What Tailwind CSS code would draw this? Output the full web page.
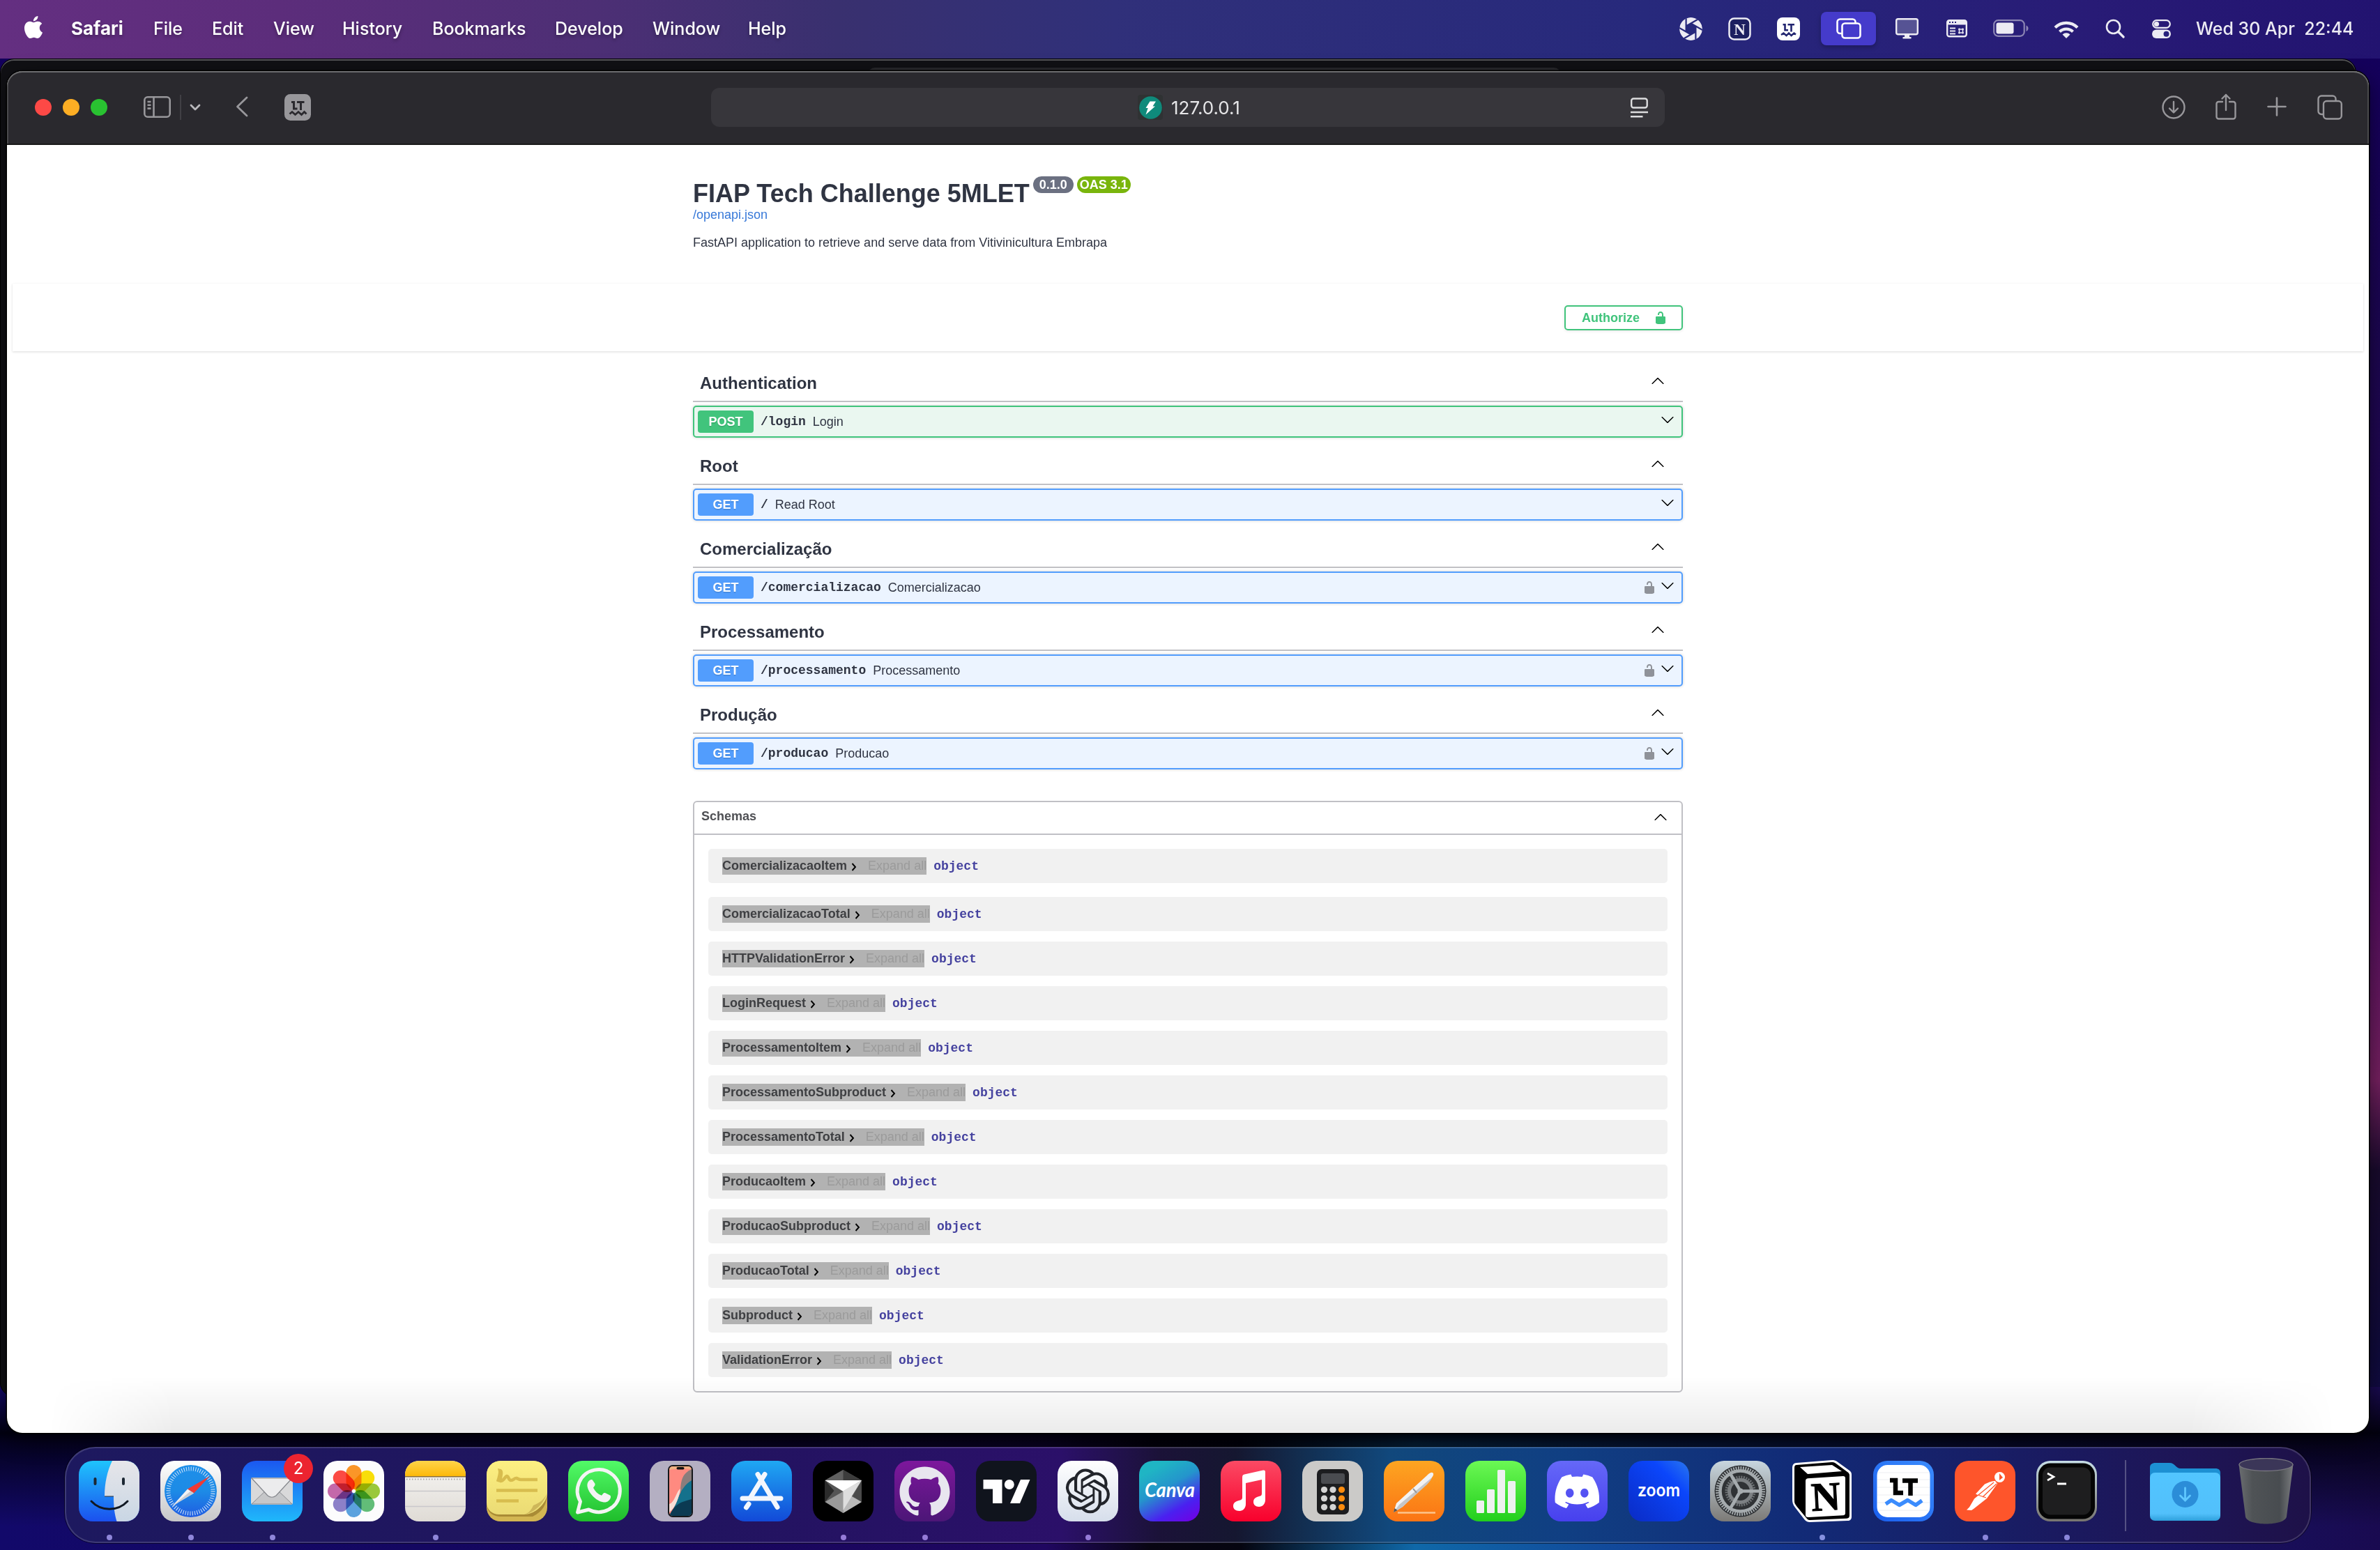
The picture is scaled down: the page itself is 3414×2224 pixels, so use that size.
<!DOCTYPE html>
<html lang="en">
<head>
<meta charset="utf-8">
<title>FIAP Tech Challenge 5MLET</title>
<script src="https://cdn.jsdelivr.net/npm/@tailwindcss/browser@4"></script>
</head>
<body class="relative h-[2224px] w-[3414px] overflow-hidden bg-[linear-gradient(to_bottom,#14005c_80px,#1c0650_500px,#260750_1000px,#4a0a5c_1250px,#74205f_1550px,#180a2c_1680px,#0f0a3c_1950px,#1a0e58_2224px)] font-['Liberation_Sans',sans-serif] text-[18px] text-[#2f3442]">

<!-- wallpaper behind the dock -->
<div class="absolute left-0 top-[1990px] h-[234px] w-full bg-[linear-gradient(to_right,#12096a_0px,#15065c_900px,#200760_1500px,#080512_1650px,#050510_1780px,#0f68a8_2030px,#123f96_2400px,#161a70_2900px,#190a50_3414px)]"></div>
<div class="absolute left-0 top-[1990px] h-[234px] w-full bg-[linear-gradient(to_bottom,#00000e00_0px,#000008e8_66px,#000008c0_80px,#00000800_200px)]"></div>

<!-- menu bar -->
<header class="relative z-0 flex h-[84px] items-start bg-[linear-gradient(to_right,#642f81_0px,#5c2d7b_400px,#4d2f75_850px,#39306f_1200px,#30307a_1600px,#27297c_2360px,#281b76_3000px,#221370_3414px)] font-[Inter,sans-serif] text-[25px] font-[450] text-white">
  <div class="flex h-[84px] shrink-0 items-start pl-[32px] pt-[23px] leading-[36px] [text-shadow:0_3px_5px_rgba(0,0,0,.3)]">
    <svg class="h-[32px] w-[32px] shrink-0" viewBox="0 0 24 24" fill="#fff"><path d="M12.152 6.896c-.948 0-2.415-1.078-3.96-1.04-2.04.027-3.91 1.183-4.961 3.014-2.117 3.675-.546 9.103 1.519 12.09 1.013 1.454 2.208 3.09 3.792 3.039 1.52-.065 2.09-.987 3.935-.987 1.831 0 2.35.987 3.96.948 1.637-.026 2.676-1.48 3.676-2.948 1.156-1.688 1.636-3.325 1.662-3.415-.039-.013-3.182-1.221-3.22-4.857-.026-3.04 2.48-4.494 2.597-4.559-1.429-2.09-3.623-2.324-4.39-2.376-2-.156-3.675 1.09-4.61 1.09zM15.53 3.83c.843-1.012 1.4-2.427 1.245-3.83-1.207.052-2.662.805-3.532 1.818-.78.896-1.454 2.338-1.273 3.714 1.338.104 2.715-.688 3.559-1.701"/></svg>
    <span class="ml-[38px] w-[118px] text-[26px] font-bold">Safari</span>
    <span class="w-[84px]">File</span>
    <span class="w-[88px]">Edit</span>
    <span class="w-[99px]">View</span>
    <span class="w-[129px]">History</span>
    <span class="w-[176px]">Bookmarks</span>
    <span class="w-[140px]">Develop</span>
    <span class="w-[137px]">Window</span>
    <span class="w-[80px]">Help</span>
  </div>
  <div class="ml-auto flex h-[84px] shrink-0 items-center pr-[32px] pb-[2px] text-[#ecebf3]">
    <svg class="h-[33px] w-[33px]" viewBox="0 0 33 33"><clipPath id="shutter"><circle cx="16.500" cy="16.500" r="16.500"/></clipPath><g clip-path="url(#shutter)"><circle cx="16.500" cy="16.500" r="16.500" fill="#ecebf3"/><path d="M16.500 24.500L23.400 20.500V12.500L16.500 8.500 9.600 12.500V20.500z" fill="#27297c"/><path d="M9.600 12.500L30.300.5M16.500 8.500L37.200 20.500M23.400 12.500V36.500M23.400 20.500L2.700 32.500M16.500 24.500L-4.200 12.500M9.600 20.500V-3.500" stroke="#27297c" stroke-width="2.200" fill="none"/></g></svg>
    <svg class="ml-[37px] h-[33px] w-[33px]" viewBox="0 0 33 33"><rect x="1.500" y="1.500" width="30" height="30" rx="7" fill="#1d2060" stroke="#ecebf3" stroke-width="2.500"/><text x="16.500" y="24.500" text-anchor="middle" font-family="Liberation Serif,serif" font-weight="700" font-size="23" fill="#ecebf3">N</text></svg>
    <svg class="ml-[37px] h-[33px] w-[33px]" viewBox="0 0 33 33"><rect width="33" height="33" rx="8" fill="#fff"/><path d="M8.500 10.200h3v8h4.500M15.500 10.200h9.500M20.500 9.500v11" stroke="#222570" stroke-width="2.600" fill="none"/><path d="M6 25l3.500-2.500 4 3.500 3.500-3.500 3.500 3.500 4-3.500 2.500 2" stroke="#222570" stroke-width="2.400" fill="none"/></svg>
    <div class="ml-[30px] flex h-[48px] w-[79px] items-center justify-center rounded-[8px] bg-[#453bcb] shadow-[0_3px_6px_rgba(0,0,0,.25)]">
      <svg class="h-[30px] w-[36px]" viewBox="0 0 36 30" fill="none" stroke="#fff" stroke-width="2.600"><path d="M8 22H5.500a4 4 0 0 1-4-4V5.500a4 4 0 0 1 4-4h18a4 4 0 0 1 4 4V7"/><rect x="8.500" y="7.500" width="26" height="21" rx="4"/></svg>
    </div>
    <svg class="ml-[28px] h-[30px] w-[33px]" viewBox="0 0 33 30"><rect x="1.200" y="1.200" width="30.600" height="22" rx="2.500" fill="#565394" stroke="#ecebf3" stroke-width="2.400"/><path d="M13 24h7v3h2.500v2.500h-12V27H13z" fill="#ecebf3"/></svg>
    <svg class="ml-[40px] h-[26px] w-[30px]" viewBox="0 0 30 26"><rect x="1.200" y="1.200" width="27.600" height="23" rx="3" fill="none" stroke="#ecebf3" stroke-width="2.400"/><rect x="1" y="1" width="28" height="6.500" rx="2" fill="#ecebf3"/><path d="M4 4h2M8 4h2M12 4h2" stroke="#27207c" stroke-width="2"/><path d="M5 12.500h8M5 16.500h8M5 20.500h8" stroke="#ecebf3" stroke-width="2"/><path d="M18.500 12.500v8M23.500 12.500v8M17 14h8M17 19h8" stroke="#ecebf3" stroke-width="1.600"/></svg>
    <svg class="ml-[37px] h-[26px] w-[52px]" viewBox="0 0 52 26"><rect x="1.200" y="1.200" width="43.500" height="22.600" rx="6" fill="none" stroke="#8c86b4" stroke-width="2.200"/><rect x="4.500" y="4.500" width="25" height="16" rx="3" fill="#ecebf3"/><path d="M47.500 8.500c4 1.500 4 7 0 8.500z" fill="#8c86b4"/></svg>
    <svg class="ml-[35px] h-[27px] w-[36px]" viewBox="0 0 36 27" fill="none" stroke="#ecebf3" stroke-width="4.200"><path d="M2 11.500a22.500 22.500 0 0 1 32 0M8.500 17.500a13.500 13.500 0 0 1 19 0"/><path d="M12.500 21.500a8 8 0 0 1 11 0L18 27z" fill="#ecebf3" stroke="none"/></svg>
    <svg class="ml-[38px] h-[28px] w-[28px]" viewBox="0 0 28 28" fill="none" stroke="#ecebf3" stroke-width="2.600"><circle cx="11.500" cy="11.500" r="9.500"/><path d="M18.500 18.500l7.500 7.500" stroke-width="3.200" stroke-linecap="round"/></svg>
    <svg class="ml-[39px] h-[27px] w-[27px]" viewBox="0 0 27 27"><rect x="1.200" y="1.200" width="24.600" height="10.600" rx="5.300" fill="none" stroke="#ecebf3" stroke-width="2.200"/><circle cx="6.500" cy="6.500" r="3.600" fill="#ecebf3"/><rect x="0" y="14.500" width="27" height="12.500" rx="6.200" fill="#ecebf3"/><circle cx="20.500" cy="20.700" r="4" fill="#27207c"/></svg>
    <span class="ml-[36px] w-[232px] whitespace-pre leading-[36px]">Wed 30 Apr  22:44</span>
  </div>
</header>

<!-- window stacked behind the browser -->
<div class="absolute left-0 top-[84px] h-[1920px] w-[3380px] rounded-[20px] border border-black bg-[#101014] shadow-[inset_0_2px_0_#555558]">
  <div class="ml-[1244px] mt-[12px] h-[20px] w-[994px] rounded-[10px] bg-[#27272b]"></div>
</div>

<!-- browser window -->
<main class="absolute left-[10px] top-[102px] flex h-[1954px] w-[3388px] flex-col overflow-hidden rounded-[22px] bg-white shadow-[0_0_0_1.5px_#000,0_10px_30px_rgba(0,0,0,.5)]">
  <div class="flex h-[106px] shrink-0 items-center rounded-t-[22px] border-b-2 border-[#1a1a1a] bg-[#2a292e] pl-[40px] shadow-[inset_0_2px_0_#6c6c6e,inset_2px_0_0_#4a4a4d,inset_-2px_0_0_#4a4a4d]">
    <div class="flex shrink-0 gap-[16px]">
      <i class="h-[24px] w-[24px] rounded-full bg-[#fd4946]"></i><i class="h-[24px] w-[24px] rounded-full bg-[#fdae24]"></i><i class="h-[24px] w-[24px] rounded-full bg-[#29c231]"></i>
    </div>
    <svg class="ml-[52px] mt-[-2px] h-[31px] w-[39px] shrink-0" viewBox="0 0 39 31" fill="none" stroke="#98979b" stroke-width="2.600"><rect x="1.300" y="1.300" width="36.400" height="28.400" rx="4.500"/><path d="M14.500 1.500v28M5.500 8h5M5.500 12.800h5M5.500 17.600h5"/></svg>
    <i class="ml-[13px] h-[36px] w-[2px] shrink-0 bg-[#414045]"></i>
    <svg class="ml-[12px] h-[10px] w-[16px] shrink-0" viewBox="0 0 16 10" fill="none" stroke="#b9b8bc" stroke-width="2.800" stroke-linecap="round" stroke-linejoin="round"><path d="M2 2l6 6 6-6"/></svg>
    <svg class="ml-[50px] mt-[-2px] h-[30px] w-[18px] shrink-0" viewBox="0 0 18 30" fill="none" stroke="#98979b" stroke-width="2.800" stroke-linecap="round" stroke-linejoin="round"><path d="M16 2L2.500 15 16 28"/></svg>
    <svg class="ml-[52px] h-[38px] w-[38px] shrink-0" viewBox="0 0 38 38"><rect width="38" height="38" rx="8.500" fill="#98979b"/><path d="M10 11.500h3.500v9.500h5M18 11.500h10.500M23.500 11v12" stroke="#2a292e" stroke-width="3" fill="none"/><path d="M7.500 28.500l3.500-3 4.500 4 4.500-4 4.500 4 4-4 3 3" stroke="#2a292e" stroke-width="2.800" fill="none"/></svg>
    <div class="ml-[574px] flex h-[56px] w-[1368px] shrink-0 items-center rounded-[12px] bg-[#37363b] font-[Inter,sans-serif] text-[26px] text-[#e6e6e8]">
      <div class="ml-[612px] flex h-[36px] w-[36px] items-center justify-center rounded-[4px] bg-[#2f3233]">
        <svg class="h-[33px] w-[33px]" viewBox="0 0 33 33"><circle cx="16.500" cy="16.500" r="16.300" fill="#0f8a7b"/><path d="M15.500 7.500h8.500l-4.500 7h3.500L9.500 26.500l3.200-9.500H9.500z" fill="#fff"/></svg>
      </div>
      <span class="ml-[12px] w-[150px] tracking-[0px]">127.0.0.1</span>
      <svg class="ml-auto mr-[24px] h-[29px] w-[25px]" viewBox="0 0 25 29" fill="none" stroke="#dddddf" stroke-width="2.400"><rect x="1.200" y="1.500" width="22.500" height="13" rx="3"/><path d="M0 21h25M0 27.300h17.500"/></svg>
    </div>
    <svg class="ml-[713px] mt-[-1px] h-[34px] w-[34px] shrink-0" viewBox="0 0 34 34" fill="none" stroke="#98979b" stroke-width="2.400" stroke-linecap="round" stroke-linejoin="round"><circle cx="17" cy="17" r="15.500"/><path d="M17 9v15M11 18.500l6 6 6-6"/></svg>
    <svg class="ml-[43px] mt-[-2px] h-[38px] w-[30px] shrink-0" viewBox="0 0 30 38" fill="none" stroke="#98979b" stroke-width="2.400" stroke-linecap="round" stroke-linejoin="round"><path d="M10 12H4.500a3 3 0 0 0-3 3v18.500a3 3 0 0 0 3 3h21a3 3 0 0 0 3-3V15a3 3 0 0 0-3-3H20M15 24V2M9.500 7.500L15 2l5.500 5.500"/></svg>
    <svg class="ml-[44px] mt-[-3px] h-[28px] w-[28px] shrink-0" viewBox="0 0 28 28" fill="none" stroke="#98979b" stroke-width="2.600" stroke-linecap="round"><path d="M14 1.500v25M1.500 14h25"/></svg>
    <svg class="ml-[44px] h-[36px] w-[36px] shrink-0" viewBox="0 0 36 36" fill="none" stroke="#98979b" stroke-width="2.400"><path d="M9 28H6a4.500 4.500 0 0 1-4.500-4.500V6A4.500 4.500 0 0 1 6 1.500h16A4.500 4.500 0 0 1 26.500 6v2.500"/><rect x="9" y="9" width="25.800" height="25.500" rx="4.500"/></svg>
  </div>

  <section class="mx-auto flex w-[1420px] shrink-0 flex-col items-start pt-[50px]">
    <div class="flex h-[40px] items-start">
      <h1 class="whitespace-nowrap text-[36px] font-bold leading-[40px]">FIAP Tech Challenge 5MLET</h1>
      <span class="ml-[5px] mt-[-5px] flex h-[24px] w-[58px] shrink-0 items-center justify-center rounded-full bg-[#6b7081] text-[18px] font-bold leading-[20px] text-white">0.1.0</span>
      <span class="ml-[5px] mt-[-5px] flex h-[24px] w-[77px] shrink-0 items-center justify-center whitespace-nowrap rounded-full bg-[#79b50c] text-[18px] font-bold leading-[20px] text-white">OAS 3.1</span>
    </div>
    <a class="leading-[20px] text-[#3778d8]">/openapi.json</a>
    <p class="mt-[20px] leading-[20px]">FastAPI application to retrieve and serve data from Vitivinicultura Embrapa</p>
  </section>

  <section class="mx-[8px] mt-[49px] h-[97px] shrink-0 bg-white pt-[31px] shadow-[0_1px_3px_rgba(0,0,0,.15)]">
    <div class="mx-auto flex w-[1420px] justify-end">
      <button class="flex h-[36px] w-[170px] items-center rounded-[5px] border-2 border-[#41c47c] pl-[23px] font-bold leading-[20px] text-[#41c47c] shadow-[0_1px_4px_rgba(0,0,0,.1)]">Authorize
        <svg class="ml-[20px] h-[20px] w-[20px]" viewBox="0 0 20 20" fill="#41c47c"><path d="M15.800 8H14V5.600C14 2.703 12.665 1 10 1 7.334 1 6 2.703 6 5.600V6h2v-.801C8 3.754 8.797 3 10 3c1.203 0 2 .754 2 2.199V8H4c-.553 0-1 .646-1 1.199V17c0 .549.428 1.139.951 1.307l1.197.387C5.672 18.861 6.550 19 7.100 19h5.800c.549 0 1.428-.139 1.951-.307l1.196-.387c.524-.167.953-.757.953-1.306V9.199C17 8.646 16.352 8 15.800 8z"/></svg>
      </button>
    </div>
  </section>

  <div id="tags" class="mx-auto mt-[18px] w-[1420px] shrink-0"></div>

  <section class="mx-auto mt-[32px] w-[1420px] shrink-0 rounded-[6px] border-2 border-[#c0c0c5]">
    <div class="flex h-[47px] items-center justify-between border-b-2 border-[#c0c0c5] pl-[10px] pr-[20px] font-bold text-[#4f5054]">
      <span class="mt-[-5px] leading-[20px]">Schemas</span>
      <svg class="mt-[-1px] h-[20px] w-[20px] rotate-180" viewBox="0 0 20 20" fill="#000"><path d="M17.418 6.109c.272-.268.709-.268.979 0s.271.701 0 .969l-7.908 7.830c-.27.268-.707.268-.979 0l-7.908-7.830c-.27-.268-.27-.701 0-.969.271-.268.709-.268.979 0L10 13.250l7.418-7.141z"/></svg>
    </div>
    <div id="schemas" class="flex flex-col gap-[15px] px-[20px] py-[20px]"></div>
  </section>
</main>
<div class="pointer-events-none absolute left-[10px] top-[1975px] h-[81px] w-[3388px] rounded-b-[22px] bg-[linear-gradient(to_bottom,#0000_0px,#00000014_81px)] [mask-image:linear-gradient(to_right,transparent_60px,#000_240px,#000_3130px,transparent_3340px)]"></div>

<!-- dock -->
<nav class="absolute left-[93px] top-[2076px] flex h-[138px] w-[3222px] items-start gap-[30px] rounded-[44px] border-2 border-white/15 bg-[linear-gradient(to_right,#1d195f_0px,#21145f_900px,#2b1069_1430px,#1b1238_1570px,#151730_1680px,#122f52_1780px,#11487c_1900px,#103f83_2150px,#122a76_2500px,#1a1a60_2850px,#1e1556_3050px,#1e1148_3222px)] bg-origin-border pl-[18px] pt-[18px] shadow-[0_0_0_1px_rgba(0,0,0,.5)]">
  <!-- Finder -->
  <div class="relative flex w-[87px] shrink-0 flex-col items-center gap-[19px]">
    <svg class="h-[87px] w-[87px] rounded-[20px]" viewBox="0 0 87 87"><defs><linearGradient id="fa" x1="0" y1="0" x2="0" y2="1"><stop offset="0" stop-color="#1fc4fd"/><stop offset="1" stop-color="#1b50ee"/></linearGradient><linearGradient id="fb" x1="0" y1="0" x2="0" y2="1"><stop offset="0" stop-color="#e6e6ea"/><stop offset="1" stop-color="#c9d6e4"/></linearGradient></defs><rect width="87" height="87" fill="url(#fa)"/><path d="M48 0C41 14 37 32 37 51H50C50 64 51 76 54.500 87H87V0z" fill="url(#fb)"/><path d="M37 51h13" stroke="#333" stroke-width="1"/><path d="M23.500 26v7M64 26v7" stroke="#1b2733" stroke-width="4" stroke-linecap="round"/><path d="M18 58c14 15 38 15 52 0" stroke="#111822" stroke-width="3" fill="none" stroke-linecap="round"/></svg>
    <i class="h-[8px] w-[8px] rounded-full bg-[#8f86da]"></i>
  </div>
  <!-- Safari -->
  <div class="relative flex w-[87px] shrink-0 flex-col items-center gap-[19px]">
    <svg class="h-[87px] w-[87px] rounded-[20px]" viewBox="0 0 87 87"><defs><linearGradient id="sa" x1="0" y1="0" x2="0" y2="1"><stop offset="0" stop-color="#fff"/><stop offset="1" stop-color="#c6c6c8"/></linearGradient><linearGradient id="sb" x1="0" y1="0" x2="0" y2="1"><stop offset="0" stop-color="#1e8fe9"/><stop offset=".5" stop-color="#1d8be6"/><stop offset="1" stop-color="#1f5ce2"/></linearGradient></defs><rect width="87" height="87" fill="url(#sa)"/><circle cx="43.500" cy="43.500" r="37.500" fill="url(#sb)"/><circle cx="43.500" cy="43.500" r="32" fill="none" stroke="#d5e6fa" stroke-width="6" stroke-dasharray="1 2.350"/><path d="M71 22L39 40.500l9 6z" fill="#f03a34"/><path d="M17 65L39 40.500l9 6z" fill="#f2f2f4"/><path d="M17 65l26.500-21.500 4.500 3z" fill="#c9ccd2"/></svg>
    <i class="h-[8px] w-[8px] rounded-full bg-[#8f86da]"></i>
  </div>
  <!-- Mail -->
  <div class="relative flex w-[87px] shrink-0 flex-col items-center gap-[19px]">
    <svg class="h-[87px] w-[87px] rounded-[20px]" viewBox="0 0 87 87"><defs><linearGradient id="ma" x1="0" y1="0" x2="0" y2="1"><stop offset="0" stop-color="#1b58f0"/><stop offset="1" stop-color="#1fb8fb"/></linearGradient></defs><rect width="87" height="87" fill="url(#ma)"/><rect x="13" y="24" width="60" height="39" rx="3" fill="#d9d9da"/><path d="M14 62l22-21h14l22 21z" fill="#c6c7c9" stroke="#8b8d92" stroke-width="1"/><path d="M14 25l23 25c3.500 3 8.500 3 12 0l23-25z" fill="#ececed" stroke="#85878c" stroke-width="1.200"/></svg>
    <i class="h-[8px] w-[8px] rounded-full bg-[#8f86da]"></i>
    <span class="absolute left-[60px] top-[-10px] flex h-[42px] w-[42px] items-center justify-center rounded-full bg-[#ec2430] font-[Inter,sans-serif] text-[24px] text-white">2</span>
  </div>
  <!-- Photos -->
  <svg class="h-[87px] w-[87px] shrink-0 rounded-[20px]" viewBox="0 0 87 87"><rect width="87" height="87" fill="#fcfcfd"/><g transform="translate(43.500 43.500)" class="isolate"><rect x="-11" y="-37.500" width="22" height="35" rx="11" fill="#fb9628" class="mix-blend-multiply"/><rect x="-11" y="-37.500" width="22" height="35" rx="11" fill="#f8de0a" class="mix-blend-multiply" transform="rotate(45)"/><rect x="-11" y="-37.500" width="22" height="35" rx="11" fill="#9ac83c" class="mix-blend-multiply" transform="rotate(90)"/><rect x="-11" y="-37.500" width="22" height="35" rx="11" fill="#62bd78" class="mix-blend-multiply" transform="rotate(135)"/><rect x="-11" y="-37.500" width="22" height="35" rx="11" fill="#5ba2de" class="mix-blend-multiply" transform="rotate(180)"/><rect x="-11" y="-37.500" width="22" height="35" rx="11" fill="#8c80c8" class="mix-blend-multiply" transform="rotate(225)"/><rect x="-11" y="-37.500" width="22" height="35" rx="11" fill="#c468aa" class="mix-blend-multiply" transform="rotate(270)"/><rect x="-11" y="-37.500" width="22" height="35" rx="11" fill="#fb4a44" class="mix-blend-multiply" transform="rotate(315)"/></g></svg>
  <!-- Notes -->
  <div class="relative flex w-[87px] shrink-0 flex-col items-center gap-[19px]">
    <svg class="h-[87px] w-[87px] rounded-[20px]" viewBox="0 0 87 87"><defs><linearGradient id="na" x1="0" y1="0" x2="0" y2="1"><stop offset="0" stop-color="#fed44a"/><stop offset="1" stop-color="#fdb90a"/></linearGradient><linearGradient id="nb" x1="0" y1="0" x2="0" y2="1"><stop offset="0" stop-color="#f7f6f4"/><stop offset="1" stop-color="#dfdbd5"/></linearGradient></defs><rect width="87" height="87" fill="url(#nb)"/><rect width="87" height="22" fill="url(#na)"/><path d="M0 22.800h87" stroke="#8a6f3c" stroke-width="1.600"/><path d="M2 26.500h84" stroke="#a9a7a4" stroke-width="2" stroke-dasharray="1.500 2.500"/><path d="M0 43.500h87M0 65.500h87" stroke="#c9c8cb" stroke-width="1.600"/></svg>
    <i class="h-[8px] w-[8px] rounded-full bg-[#8f86da]"></i>
  </div>
  <!-- Stickies -->
  <svg class="h-[87px] w-[87px] shrink-0 rounded-[20px]" viewBox="0 0 87 87"><defs><linearGradient id="st" x1="0" y1="0" x2="0" y2="1"><stop offset="0" stop-color="#fdf082"/><stop offset="1" stop-color="#ebdb74"/></linearGradient></defs><rect width="87" height="87" fill="#d3b652"/><path d="M0 60Q0 78 18 80H66Q87 70 87 46V40L60 70z" fill="#a98b35"/><path d="M0 0H87V46C87 60 70 77 54 77H18C8 77 0 70 0 60z" fill="url(#st)"/><path d="M54 77c10-1 27-12 33-31-4 9-10 14-20 18-3 7-7 11-13 13z" fill="#b99d46" opacity=".6"/><g stroke="#d8bd4e" fill="none" stroke-width="4.500"><path d="M16 30c2-6 4-12 3-16 5 1-1 13 1 15 5 0 6-6 9-7 3 0 2 6 6 6s5-4 8-3 3 2 6 2h24"/><path d="M14 42.500h59M14 57.500h32"/></g></svg>
  <!-- WhatsApp -->
  <svg class="h-[87px] w-[87px] shrink-0 rounded-[20px]" viewBox="0 0 87 87"><defs><linearGradient id="wa" x1="0" y1="0" x2="0" y2="1"><stop offset="0" stop-color="#52fb68"/><stop offset="1" stop-color="#1fbd2b"/></linearGradient></defs><rect width="87" height="87" fill="url(#wa)"/><path d="M13.500 74l4-15.500A30.500 30.500 0 1 1 29.500 70z" fill="none" stroke="#f4f4f4" stroke-width="5" stroke-linejoin="round"/><path d="M33 27c-4 1-6 5-5.500 9.500C29 46 40 58 51 59.500c5 .5 9-2.500 10-7 .3-1.500-.2-2.500-1.500-3.200l-6-3c-1.500-.7-2.500-.3-3.300.7l-2.200 2.700c-5.500-2-9.500-6-12-11l2-3c.7-1 .8-2 .3-3.200L35.500 28.500c-.5-1.200-1.300-1.700-2.500-1.500z" fill="#f4f4f4"/></svg>
  <!-- iPhone Mirroring -->
  <svg class="h-[87px] w-[87px] shrink-0 rounded-[20px]" viewBox="0 0 87 87"><rect width="87" height="87" fill="#b4afc2"/><clipPath id="ph"><rect x="28" y="8" width="32" height="71" rx="5"/></clipPath><rect x="26" y="6" width="36" height="75" rx="7" fill="#15171a"/><g clip-path="url(#ph)"><rect x="28" y="8" width="32" height="71" fill="#ff8a80"/><path d="M60 12C48 18 44 26 44 46L60 28z" fill="#8b7d7c"/><path d="M28 8h32v4c-12-1-20-1-32 1z" fill="#efb183"/><path d="M28 79c14-20 12-38 32-51v51z" fill="#14718c"/><path d="M28 79c8-18 18-20 32-24v24z" fill="#0b3a52"/><path d="M28 62c8-2 10-18 16-22-2 12-6 26-16 34z" fill="#f7ded6"/></g><rect x="38.500" y="9" width="11" height="3.500" rx="1.700" fill="#111"/></svg>
  <!-- App Store -->
  <svg class="h-[87px] w-[87px] shrink-0 rounded-[20px]" viewBox="0 0 87 87"><defs><linearGradient id="as" x1="0" y1="0" x2="0" y2="1"><stop offset="0" stop-color="#1fa8f3"/><stop offset="1" stop-color="#1249d8"/></linearGradient></defs><rect width="87" height="87" fill="url(#as)"/><g stroke="#f3f7fd" stroke-width="7" stroke-linecap="round"><path d="M16 54h55"/><path d="M38 19.500L66 66.500"/><path d="M48 19.500L28 52M25 62l-3.500 5"/></g></svg>
  <!-- Cursor -->
  <div class="relative flex w-[87px] shrink-0 flex-col items-center gap-[19px]">
    <svg class="h-[87px] w-[87px] rounded-[20px]" viewBox="0 0 87 87"><rect width="87" height="87" fill="#000"/><path d="M43.500 13L70 28v31L43.500 75 17.500 59V28z" fill="#555"/><path d="M43.500 13L70 28H17.500z" fill="#3c3c3c"/><path d="M43.500 13v15h-26z" fill="#606060"/><path d="M17.500 28v31l13-16z" fill="#2b2b2b"/><path d="M17.500 59l26-15v31z" fill="#9a9a9a"/><path d="M43.500 44V75L70 59z" fill="#b9b9b9"/><path d="M70 28v31L58 51z" fill="#4a4a4a"/><path d="M17.500 28H70L43.500 44z" fill="#fff"/><path d="M70 28L43.500 43v28z" fill="#dedede"/></svg>
    <i class="h-[8px] w-[8px] rounded-full bg-[#957bd8]"></i>
  </div>
  <!-- GitHub -->
  <div class="relative flex w-[87px] shrink-0 flex-col items-center gap-[19px]">
    <svg class="h-[87px] w-[87px] rounded-[20px]" viewBox="0 0 87 87"><defs><linearGradient id="gh" x1="0" y1="0" x2="0" y2="1"><stop offset="0" stop-color="#7d179c"/><stop offset="1" stop-color="#4c1677"/></linearGradient></defs><rect width="87" height="87" fill="url(#gh)"/><path transform="translate(7.500 7.500) scale(3)" fill="#e8e6ef" d="M12 .297c-6.630 0-12 5.373-12 12 0 5.303 3.438 9.800 8.205 11.385.6.113.82-.258.82-.577 0-.285-.01-1.040-.015-2.040-3.338.724-4.042-1.610-4.042-1.610C4.422 18.070 3.633 17.700 3.633 17.700c-1.087-.744.084-.729.084-.729 1.205.084 1.838 1.236 1.838 1.236 1.070 1.835 2.809 1.305 3.495.998.108-.776.417-1.305.76-1.605-2.665-.3-5.466-1.332-5.466-5.930 0-1.310.465-2.380 1.235-3.220-.135-.303-.54-1.523.105-3.176 0 0 1.005-.322 3.300 1.230.96-.267 1.980-.399 3-.405 1.020.006 2.040.138 3 .405 2.280-1.552 3.285-1.230 3.285-1.230.645 1.653.24 2.873.12 3.176.765.840 1.230 1.910 1.230 3.220 0 4.610-2.805 5.625-5.475 5.920.42.360.81 1.096.81 2.220 0 1.606-.015 2.896-.015 3.286 0 .315.210.690.825.570C20.565 22.092 24 17.592 24 12.297c0-6.627-5.373-12-12-12"/></svg>
    <i class="h-[8px] w-[8px] rounded-full bg-[#957bd8]"></i>
  </div>
  <!-- TradingView -->
  <svg class="h-[87px] w-[87px] shrink-0 rounded-[20px]" viewBox="0 0 87 87"><rect width="87" height="87" fill="#10141d"/><path d="M10.500 27h27v34H24V40.500H10.500zM64 27h13.500L63 61H49z" fill="#fff"/><circle cx="47.800" cy="34" r="7" fill="#fff"/></svg>
  <!-- ChatGPT -->
  <div class="relative flex w-[87px] shrink-0 flex-col items-center gap-[19px]">
    <svg class="h-[87px] w-[87px] rounded-[20px]" viewBox="0 0 87 87"><defs><linearGradient id="cg" x1="0" y1="0" x2="0" y2="1"><stop offset="0" stop-color="#fff"/><stop offset="1" stop-color="#d6deeb"/></linearGradient></defs><rect width="87" height="87" fill="url(#cg)"/><path transform="translate(11.500 11.500) scale(2.660)" fill="#22252b" d="M22.282 9.821a5.985 5.985 0 0 0-.516-4.911 6.046 6.046 0 0 0-6.510-2.900A6.065 6.065 0 0 0 4.981 4.182a5.985 5.985 0 0 0-3.998 2.900 6.046 6.046 0 0 0 .743 7.097 5.980 5.980 0 0 0 .511 4.911 6.051 6.051 0 0 0 6.515 2.900A5.985 5.985 0 0 0 13.260 24a6.056 6.056 0 0 0 5.772-4.206 5.989 5.989 0 0 0 3.998-2.900 6.056 6.056 0 0 0-.748-7.073zM13.260 22.430a4.476 4.476 0 0 1-2.876-1.041l.142-.080 4.778-2.758a.795.795 0 0 0 .393-.681v-6.737l2.020 1.169a.071.071 0 0 1 .038.052v5.583a4.504 4.504 0 0 1-4.495 4.494zM3.599 18.304a4.471 4.471 0 0 1-.535-3.014l.142.085 4.783 2.758a.771.771 0 0 0 .781 0l5.843-3.368v2.332a.080.080 0 0 1-.033.062L9.740 19.950a4.499 4.499 0 0 1-6.141-1.646zM2.341 7.896a4.485 4.485 0 0 1 2.366-1.973V11.600a.766.766 0 0 0 .388.677l5.814 3.354-2.020 1.168a.076.076 0 0 1-.071 0l-4.830-2.786A4.504 4.504 0 0 1 2.341 7.872zM18.937 11.751L13.104 8.364 15.119 7.200a.076.076 0 0 1 .071 0l4.830 2.791a4.494 4.494 0 0 1-.677 8.104v-5.677a.790.790 0 0 0-.406-.667zM20.948 8.728l-.142-.085-4.774-2.782a.776.776 0 0 0-.785 0L9.409 9.230V6.897a.066.066 0 0 1 .028-.062l4.830-2.786a4.499 4.499 0 0 1 6.681 4.679zM8.307 12.863l-2.020-1.164a.080.080 0 0 1-.038-.057V6.074a4.499 4.499 0 0 1 7.376-3.454l-.142.081L8.704 5.459a.795.795 0 0 0-.393.681zM9.404 10.498l2.602-1.500 2.607 1.500v2.999l-2.597 1.500-2.607-1.500Z"/></svg>
    <i class="h-[8px] w-[8px] rounded-full bg-[#957bd8]"></i>
  </div>
  <!-- Canva -->
  <svg class="h-[87px] w-[87px] shrink-0 rounded-[20px]" viewBox="0 0 87 87"><defs><linearGradient id="ca" x1=".3" y1=".1" x2=".8" y2="1"><stop offset="0" stop-color="#1fb5c4"/><stop offset=".35" stop-color="#2495cc"/><stop offset=".75" stop-color="#4a20f0"/><stop offset="1" stop-color="#6a06e6"/></linearGradient></defs><rect width="87" height="87" fill="url(#ca)"/><text x="44" y="52" text-anchor="middle" textLength="72" lengthAdjust="spacingAndGlyphs" font-family="Lato,sans-serif" font-style="italic" font-weight="700" font-size="28" fill="#fff">Canva</text></svg>
  <!-- Music -->
  <svg class="h-[87px] w-[87px] shrink-0 rounded-[20px]" viewBox="0 0 87 87"><defs><linearGradient id="mu" x1="0" y1="0" x2="0" y2="1"><stop offset="0" stop-color="#fb4a64"/><stop offset="1" stop-color="#f8002c"/></linearGradient></defs><rect width="87" height="87" fill="url(#mu)"/><path d="M31 24c0-3 1-4 3-4.500l27-6c2-.4 3 .3 3 2.500V56c0 6-4 10-9 10-5 0-8-3-8-7 0-5 4-7 8-8 3-.7 4-1.500 4-4V27l-23 5v30c0 6-4 10-9 10-6 0-9-3-9-7 0-5 4-7 8-8 3-.7 5-1.500 5-4z" fill="#fff"/></svg>
  <!-- Calculator -->
  <svg class="h-[87px] w-[87px] shrink-0 rounded-[20px]" viewBox="0 0 87 87"><rect width="87" height="87" fill="#cbcac8"/><rect x="21" y="12" width="46" height="65" rx="7" fill="#1c1d1f"/><rect x="27" y="18" width="34" height="15" rx="3" fill="#4a4c50"/><g fill="#d4d4d4"><circle cx="31.500" cy="41.500" r="4.600"/><circle cx="44" cy="41.500" r="4.600"/><circle cx="31.500" cy="54" r="4.600"/><circle cx="44" cy="54" r="4.600"/><circle cx="31.500" cy="66.500" r="4.600"/><circle cx="44" cy="66.500" r="4.600"/></g><g fill="#fd8c0e"><circle cx="56.500" cy="41.500" r="4.600"/><circle cx="56.500" cy="54" r="4.600"/><circle cx="56.500" cy="66.500" r="4.600"/></g></svg>
  <!-- Pages -->
  <svg class="h-[87px] w-[87px] shrink-0 rounded-[20px]" viewBox="0 0 87 87"><defs><linearGradient id="pa" x1="0" y1="0" x2="0" y2="1"><stop offset="0" stop-color="#fda521"/><stop offset="1" stop-color="#fb7414"/></linearGradient></defs><rect width="87" height="87" fill="url(#pa)"/><path d="M20 74.500h54" stroke="#fdc48c" stroke-width="2.500"/><path d="M14 74l4-13L62 21c4-4 7-5 8.500-3.500 1.500 1.500.5 4-2.500 8L27 66z" fill="#f2f2f3"/><path d="M22 63L69 24c-1 3-4 7-7 10L27 66l-13 8z" fill="#c5c6c9"/><path d="M14 74l1.500-6 4 3z" fill="#555"/><path d="M42 40l5 6" stroke="#999" stroke-width="2"/></svg>
  <!-- Numbers -->
  <svg class="h-[87px] w-[87px] shrink-0 rounded-[20px]" viewBox="0 0 87 87"><defs><linearGradient id="nu" x1="0" y1="0" x2="0" y2="1"><stop offset="0" stop-color="#6bf854"/><stop offset="1" stop-color="#22cf1c"/></linearGradient></defs><rect width="87" height="87" fill="url(#nu)"/><g fill="#eef1ef"><rect x="16" y="57" width="11" height="18" rx="1.500"/><rect x="31" y="41" width="11" height="34" rx="1.500"/><rect x="46" y="13" width="11" height="62" rx="1.500"/><rect x="61" y="29" width="11" height="46" rx="1.500"/></g></svg>
  <!-- Discord -->
  <svg class="h-[87px] w-[87px] shrink-0 rounded-[20px]" viewBox="0 0 87 87"><defs><linearGradient id="di" x1="0" y1="0" x2="0" y2="1"><stop offset="0" stop-color="#6568f8"/><stop offset="1" stop-color="#4740ee"/></linearGradient></defs><rect width="87" height="87" fill="url(#di)"/><path transform="translate(11.500 12) scale(2.650)" fill="#fff" d="M20.317 4.370a19.791 19.791 0 0 0-4.885-1.515.074.074 0 0 0-.079.037c-.211.375-.445.865-.608 1.250-1.845-.276-3.680-.276-5.487 0-.164-.393-.406-.874-.618-1.250a.077.077 0 0 0-.079-.037 19.736 19.736 0 0 0-4.885 1.515.070.070 0 0 0-.032.028C.533 9.046-.319 13.580.099 18.058a.082.082 0 0 0 .031.056c2.053 1.508 4.041 2.423 5.993 3.029a.078.078 0 0 0 .084-.028c.462-.630.873-1.295 1.226-1.994a.076.076 0 0 0-.042-.106c-.653-.248-1.274-.550-1.872-.892a.077.077 0 0 1-.008-.128c.126-.094.252-.192.372-.291a.074.074 0 0 1 .078-.011c3.928 1.793 8.180 1.793 12.061 0a.074.074 0 0 1 .079.010c.120.099.246.198.373.292a.077.077 0 0 1-.007.128 12.299 12.299 0 0 1-1.873.891.077.077 0 0 0-.041.107c.360.698.772 1.363 1.225 1.993a.076.076 0 0 0 .084.029c1.961-.607 3.950-1.522 6.002-3.029a.077.077 0 0 0 .031-.055c.500-5.177-.838-9.674-3.549-13.660a.061.061 0 0 0-.031-.029zM8.020 15.331c-1.183 0-2.157-1.086-2.157-2.419 0-1.333.956-2.419 2.157-2.419 1.211 0 2.176 1.095 2.157 2.419 0 1.333-.956 2.419-2.157 2.419zm7.975 0c-1.183 0-2.157-1.086-2.157-2.419 0-1.333.955-2.419 2.157-2.419 1.211 0 2.176 1.095 2.157 2.419 0 1.333-.946 2.419-2.157 2.419z"/></svg>
  <!-- Zoom -->
  <svg class="h-[87px] w-[87px] shrink-0 rounded-[20px]" viewBox="0 0 87 87"><defs><linearGradient id="zo" x1="1" y1="0" x2="0" y2="1"><stop offset="0" stop-color="#2a78ee"/><stop offset=".3" stop-color="#0b46fb"/><stop offset="1" stop-color="#0a2bc4"/></linearGradient></defs><rect width="87" height="87" fill="url(#zo)"/><text x="43.500" y="51" text-anchor="middle" textLength="61" lengthAdjust="spacingAndGlyphs" font-family="Inter,sans-serif" font-weight="600" font-size="25" fill="#fff">zoom</text></svg>
  <!-- System Settings -->
  <svg class="h-[87px] w-[87px] shrink-0 rounded-[20px]" viewBox="0 0 87 87"><defs><linearGradient id="se" x1="0" y1="0" x2="0" y2="1"><stop offset="0" stop-color="#c8d6df"/><stop offset="1" stop-color="#7c7a76"/></linearGradient></defs><rect width="87" height="87" fill="url(#se)"/><g transform="translate(43.500 43.500)" fill="none"><circle r="37" fill="#2f3235"/><circle r="33" stroke="#a5abae" stroke-width="5" stroke-dasharray="1.800 1.650"/><circle r="29" stroke="#a5abae" stroke-width="4.500"/><circle r="20" stroke="#6c7073" stroke-width="4" stroke-dasharray="2 1.500"/><circle r="16" stroke="#7c8083" stroke-width="5"/><path d="M0 0h29M0 0l-14.500-25M0 0l-14.500 25" stroke="#a5abae" stroke-width="4.500"/><circle r="4" fill="#a5abae"/></g></svg>
  <!-- Notion -->
  <div class="relative flex w-[87px] shrink-0 flex-col items-center gap-[19px]">
    <svg class="h-[87px] w-[87px] overflow-visible" viewBox="0 0 87 87"><path d="M7 3L58-1c3 0 5 .5 7 2L83 14c2 1.500 3 3 3 6v60c0 4-2 6-6 6L26 88c-3 0-5-1-7-3L5 67c-3-4-4-7-4-11V10c0-4 2-7 6-7z" fill="#fff"/><path d="M7 6L57 2c3 0 4 0 6 1.500L80 16c2 1.500 3 2.500 3 5v57c0 3-1 4.500-4 4.700L27 85c-3 0-4-.5-6-3L7 65c-2-3-3-4-3-7V10c0-2.500 1-4 3-4z" fill="#000"/><path d="M12 9l46-3 14 9-49 4z" fill="#fff"/><path d="M20 29c0-2 1-3.500 3-3.700L74 22c2 0 3 1 3 3v50c0 2-1 3-3 3.200L24 81c-3 0-4-1-4-3.500z" fill="#fff"/><text x="49" y="71" text-anchor="middle" font-family="Liberation Serif,serif" font-weight="700" font-size="58" fill="#000" stroke="#000" stroke-width="1" transform="rotate(-3 49 52)">N</text></svg>
    <i class="h-[8px] w-[8px] rounded-full bg-[#8591e0]"></i>
  </div>
  <!-- LanguageTool -->
  <svg class="h-[87px] w-[87px] shrink-0 rounded-[20px]" viewBox="0 0 87 87"><defs><linearGradient id="lt" x1="1" y1="0" x2="0" y2="1"><stop offset="0" stop-color="#3b8cfd"/><stop offset="1" stop-color="#1a5fee"/></linearGradient></defs><rect width="87" height="87" fill="url(#lt)"/><rect x="5.500" y="6" width="76" height="75" rx="15" fill="#fff"/><path d="M6 17h75M6 27h75M6 38h75M6 49h75M6 60h75M6 71h75" stroke="#eceef2" stroke-width="1"/><path d="M24 28h8v18h11M42 28.500h22M53.500 26v24" stroke="#000" stroke-width="6.500" fill="none"/><path d="M18 62l8-5.500 11.500 7 12-7 11.500 7 9-6.500" stroke="#3b8cfd" stroke-width="5.500" fill="none" stroke-linejoin="round"/></svg>
  <!-- Postman -->
  <div class="relative flex w-[87px] shrink-0 flex-col items-center gap-[19px]">
    <svg class="h-[87px] w-[87px] rounded-[20px]" viewBox="0 0 87 87"><rect width="87" height="87" fill="#fe552b"/><circle cx="64.500" cy="23.500" r="7.500" fill="#fff"/><path d="M64 18l5 6-5 4z" fill="#fe552b"/><path d="M58 29l3 4L46 54 27 69l-3 2-7-.5 4-4 7-12 6-5-4-2 13-14c5-2 10-5 15-4.500z" fill="#fff"/><path d="M56 31L34 49M60 33L40 52M33 49l12 4" stroke="#fe552b" stroke-width="1.300"/></svg>
    <i class="h-[8px] w-[8px] rounded-full bg-[#8a86da]"></i>
  </div>
  <!-- Terminal -->
  <div class="relative flex w-[87px] shrink-0 flex-col items-center gap-[19px]">
    <svg class="h-[87px] w-[87px] rounded-[20px]" viewBox="0 0 87 87"><defs><linearGradient id="te" x1="0" y1="0" x2="0" y2="1"><stop offset="0" stop-color="#c6dde6"/><stop offset="1" stop-color="#77746f"/></linearGradient></defs><rect width="87" height="87" fill="url(#te)"/><rect x="3" y="3.500" width="81" height="80" rx="17" fill="#050505"/><rect x="9" y="9.500" width="69" height="68" rx="11" fill="#1e1e1f"/><path d="M16 18l9 5-9 5" stroke="#fff" stroke-width="2.600" fill="none"/><path d="M30 33h13" stroke="#fff" stroke-width="2.800"/></svg>
    <i class="h-[8px] w-[8px] rounded-full bg-[#8a86da]"></i>
  </div>
  <i class="ml-[10px] h-[102px] w-[2px] shrink-0 -translate-y-[1px] bg-white/25"></i>
  <!-- Downloads -->
  <svg class="ml-[4px] mt-[2px] h-[85px] w-[101px] shrink-0" viewBox="0 0 101 85"><defs><linearGradient id="fo" x1="0" y1="0" x2="0" y2="1"><stop offset="0" stop-color="#52c5ff"/><stop offset=".85" stop-color="#52c0fb"/><stop offset="1" stop-color="#2ea0dc"/></linearGradient></defs><path d="M0 8c0-5 3-7 8-7h20c8 0 9 8 16 8h50c4 0 7 2 7 6v10H0z" fill="#1d90d3"/><rect y="15" width="101" height="69" rx="7" fill="url(#fo)"/><circle cx="50.500" cy="46" r="19" fill="#2b8dd8"/><path d="M50.500 37v17M43.500 48l7 7 7-7" stroke="#5fc8ff" stroke-width="2.800" fill="none" stroke-linecap="round"/></svg>
  <!-- Trash -->
  <svg class="ml-[-4px] mt-[-4px] h-[96px] w-[79px] shrink-0" viewBox="0 0 79 96"><defs><linearGradient id="tr" x1="0" y1="0" x2="1" y2="0"><stop offset="0" stop-color="#6a6d70"/><stop offset=".25" stop-color="#4f5356"/><stop offset=".75" stop-color="#484c50"/><stop offset="1" stop-color="#7a7c7e"/></linearGradient></defs><path d="M.5 9L10 84c2 14 57 14 59 0L78.500 9z" fill="url(#tr)"/><ellipse cx="39.500" cy="9.500" rx="38.500" ry="9" fill="#3b3658" stroke="#77757f" stroke-width="1.400"/></svg>
</nav>

<script>
const arrow = '<path d="M17.418 6.109c.272-.268.709-.268.979 0s.271.701 0 .969l-7.908 7.830c-.27.268-.707.268-.979 0l-7.908-7.830c-.27-.268-.27-.701 0-.969.271-.268.709-.268.979 0L10 13.250l7.418-7.141z"/>';
const lock = '<svg class="h-[20px] w-[20px]" viewBox="0 0 20 20" fill="#8f9299"><path d="M15.800 8H14V5.600C14 2.703 12.665 1 10 1 7.334 1 6 2.703 6 5.600V6h2v-.801C8 3.754 8.797 3 10 3c1.203 0 2 .754 2 2.199V8H4c-.553 0-1 .646-1 1.199V17c0 .549.428 1.139.951 1.307l1.197.387C5.672 18.861 6.550 19 7.100 19h5.800c.549 0 1.428-.139 1.951-.307l1.196-.387c.524-.167.953-.757.953-1.306V9.199C17 8.646 16.352 8 15.800 8z"/></svg>';
const tags = [
  ['Authentication', 'POST', '/login', 'Login', false],
  ['Root', 'GET', '/', 'Read Root', false],
  ['Comercialização', 'GET', '/comercializacao', 'Comercializacao', true],
  ['Processamento', 'GET', '/processamento', 'Processamento', true],
  ['Produção', 'GET', '/producao', 'Producao', true],
];
const block = {
  POST: 'flex h-[46px] items-center rounded-[5px] border-2 border-[#41c47c] bg-[#eaf7f0] pl-[5px] pr-[10px] shadow-[0_0_4px_rgba(0,0,0,.19)]',
  GET: 'flex h-[46px] items-center rounded-[5px] border-2 border-[#529dfd] bg-[#ecf4ff] pl-[5px] pr-[10px] shadow-[0_0_4px_rgba(0,0,0,.19)]',
};
const badge = {
  POST: 'flex h-[32px] w-[80px] items-center justify-center rounded-[4px] bg-[#41c47c] font-bold leading-[20px] text-white [text-shadow:0_2px_0_rgba(0,0,0,.1)]',
  GET: 'flex h-[32px] w-[80px] items-center justify-center rounded-[4px] bg-[#529dfd] font-bold leading-[20px] text-white [text-shadow:0_2px_0_rgba(0,0,0,.1)]',
};
document.getElementById('tags').innerHTML = tags.map(([name, verb, path, text, locked]) => `
  <section class="h-[119px]">
    <div class="flex h-[55px] items-center justify-between border-b-2 border-[#c1c1c5] pl-[10px] pr-[26px]">
      <h2 class="mt-[2px] text-[24px] font-bold leading-[28px]">${name}</h2>
      <svg class="mt-[-3px] h-[20px] w-[20px] rotate-180" viewBox="0 0 20 20" fill="#000">${arrow}</svg>
    </div>
    <div class="h-[5px]"></div>
    <div class="${block[verb]}">
      <span class="${badge[verb]}">${verb}</span>
      <span class="ml-[10px] font-['Liberation_Mono',monospace] font-bold leading-[20px]">${path}</span>
      <span class="ml-[10px] leading-[20px]">${text}</span>
      <div class="ml-auto flex items-center gap-[6px]">${locked ? lock : ''}<svg class="mt-[-6px] h-[20px] w-[20px]" viewBox="0 0 20 20" fill="#000">${arrow}</svg></div>
    </div>
  </section>`).join('');

const schemas = ['ComercializacaoItem', 'ComercializacaoTotal', 'HTTPValidationError', 'LoginRequest', 'ProcessamentoItem', 'ProcessamentoSubproduct', 'ProcessamentoTotal', 'ProducaoItem', 'ProducaoSubproduct', 'ProducaoTotal', 'Subproduct', 'ValidationError'];
document.getElementById('schemas').innerHTML = schemas.map((name, i) => `
  <div class="${i === 0 ? 'mb-[5px] flex h-[49px] items-center rounded-[5px] bg-[#f1f1f1] pl-[20px]' : 'flex h-[49px] items-center rounded-[5px] bg-[#f1f1f1] pl-[20px]'}">
    <div class="flex h-[25px] items-center bg-[#b2b2b2] pb-[2px] leading-[20px]">
      <span class="font-bold text-[#3e3f42]">${name}</span>
      <svg class="ml-[6px] mt-[4px] h-[12px] w-[8px]" viewBox="0 0 8 12" fill="none" stroke="#000" stroke-width="1.900"><path d="M1.500 1l4.500 5-4.500 5"/></svg>
      <span class="ml-[16px] text-[#9b9b9b]">Expand all</span>
    </div>
    <span class="ml-[10px] font-['Liberation_Mono',monospace] font-bold leading-[20px] text-[#45429f]">object</span>
  </div>`).join('');
</script>
</body>
</html>
